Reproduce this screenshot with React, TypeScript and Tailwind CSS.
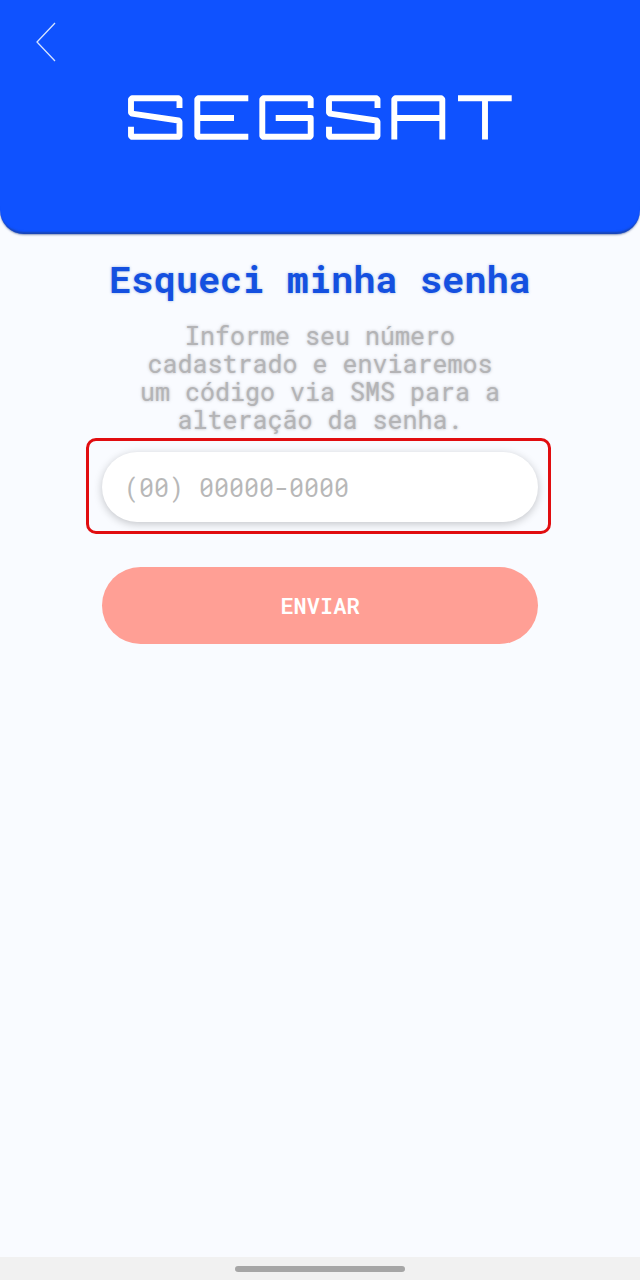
import React from "react";

function BackIcon() {
  return (
    <svg width="20" height="40" viewBox="0 0 20 40" fill="none" aria-hidden="true">
      <path d="M19 1 1 20l18 19" stroke="#d6e4ff" strokeWidth="1.3" />
    </svg>
  );
}

function Logo() {
  return (
    <svg
      role="img"
      aria-label="SEGSAT"
      className="w-3/5"
      viewBox="0 0 384 45"
      fill="none"
      stroke="#fff"
      strokeWidth="5.9"
      strokeLinejoin="round"
    >
      <path d="M51.5 13V4.300L50.500 3.300H4L3 4.300V17.500L4 18.700 50.500 25.500 51.500 26.700V40.800L50.500 41.800H4L3 40.800V31.700" />
      <path d="M120.300 3.300H70.300L69.300 4.300V40.800L70.300 41.800H120.300M69.300 23H106" />
      <path d="M182.700 13V4.300L181.700 3.300H135.300L134.300 4.300V40.800L135.300 41.800H181.700L182.700 40.800V23H147.700" />
      <path d="M249.500 13V4.300L248.500 3.300H202L201 4.300V17.500L202 18.700 248.500 25.500 249.500 26.700V40.800L248.500 41.800H202L201 40.800V31.700" />
      <path d="M266.300 44.600V4.300L267.300 3.300H313.300L314.300 4.300V44.600M266.300 23H314.300" />
      <path d="M330 3.300H383.700M357 3.300V44.600" />
    </svg>
  );
}

export default function App() {
  return (
    <div className="flex min-h-screen flex-col bg-[#f9fbff] font-['Roboto_Mono','DejaVu_Sans_Mono',monospace]">
      <header className="rounded-b-3xl bg-[#0f52ff] px-6 pt-5 pb-[94px] shadow-[0_1px_2px_rgba(20,50,120,0.5),inset_0_-4px_2px_-2px_rgba(30,60,130,0.6)]">
        <button type="button" aria-label="Voltar" className="flex size-11 items-center justify-center">
          <BackIcon />
        </button>
        <div className="-mx-6 mt-[31px] flex justify-center">
          <Logo />
        </div>
      </header>

      <main className="flex grow flex-col px-[102px] pt-[23px]">
        <h1 className="-mx-20 text-center text-[37px] leading-11 font-bold text-[#1450e0] [text-shadow:0_0_3px_rgba(20,80,180,0.4)]">
          Esqueci minha senha
        </h1>
        <p className="mx-auto mt-[21px] max-w-96 text-center text-[25px] leading-7 text-[#b4b4b6] [text-shadow:0_0_3px_rgba(140,140,145,0.6)]">
          Informe seu número cadastrado e enviaremos um código via SMS para a alteração da senha.
        </p>
        <form className="mt-1 flex flex-col" onSubmit={(e) => e.preventDefault()}>
          <div className="-mr-[13px] -ml-4 rounded-[10px] border-3 border-[#e10d10] pt-[11px] pr-[10px] pb-[9px] pl-[13px]">
            <input
              type="tel"
              aria-label="Número de telefone"
              placeholder="(00) 00000-0000"
              className="block h-[70px] w-full rounded-full bg-white px-[22px] text-[25px] shadow-[0_2px_8px_rgba(0,0,0,0.22)] outline-none placeholder:text-[#b8b8b8] placeholder:opacity-100"
            />
          </div>
          <button
            type="submit"
            className="mt-[33px] h-[77px] rounded-full bg-[#ff9f95] text-[22px] font-semibold text-white"
          >
            ENVIAR
          </button>
        </form>
      </main>

      <footer className="flex h-[23px] items-center justify-center bg-[#f1f1f1]">
        <div className="h-[6px] w-[170px] rounded-full bg-[#a6a6a6]" />
      </footer>
    </div>
  );
}
